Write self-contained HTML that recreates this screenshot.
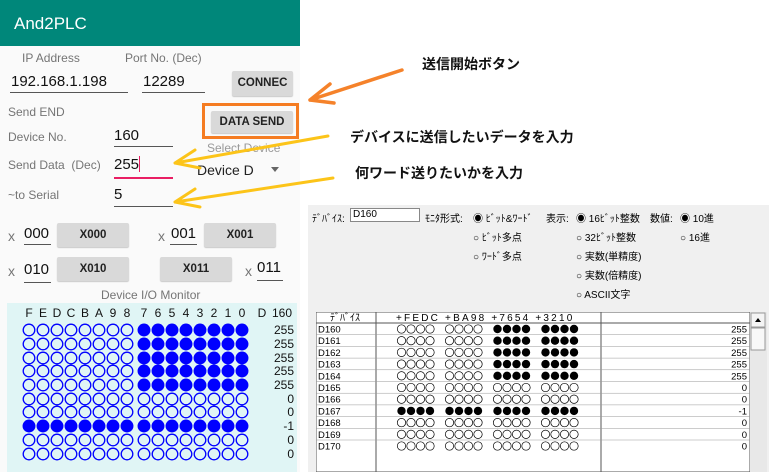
<!DOCTYPE html>
<html><head><meta charset="utf-8"><style>
*{margin:0;padding:0;box-sizing:border-box}
body{width:769px;height:472px;background:#fff;position:relative;overflow:hidden;font-family:"Liberation Sans","Noto Sans CJK JP",sans-serif}
.a{position:absolute;white-space:nowrap}
.ph{position:absolute;left:0;top:0;width:300px;height:472px;background:#fafafa}
.hdr{position:absolute;left:0;top:0;width:300px;height:46px;background:#00877a;color:#fff;font-size:17px;padding:14px 0 0 14px}
.lb{color:#757575;font-size:12px}
.in{font-size:15px;color:#111}
.ul{position:absolute;height:1px;background:#555}
.btn{position:absolute;background:#d9d9d9;border-radius:2px;font-size:11.5px;font-weight:bold;color:#222;text-align:center;box-shadow:0 1px 1px rgba(0,0,0,.2)}
.win{position:absolute;left:308px;top:205px;width:461px;height:267px;background:#f0f0f0;font-size:10px;color:#000}
.jp{font-family:"Liberation Sans","Noto Sans CJK JP",sans-serif;font-weight:bold;font-size:14px;color:#111}
</style></head><body>
<div class="ph">
<div class="hdr">And2PLC</div>
<div class="a lb" style="left:22px;top:51px">IP Address</div>
<div class="a lb" style="left:125px;top:51px">Port No. (Dec)</div>
<div class="a in" style="left:11px;top:73px">192.168.1.198</div>
<div class="ul" style="left:10px;top:92px;width:118px"></div>
<div class="a in" style="left:143px;top:73px">12289</div>
<div class="ul" style="left:142px;top:92px;width:63px"></div>
<div class="btn" style="left:232px;top:71px;width:61px;height:25px;line-height:25px">CONNEC</div>
<div class="a lb" style="left:8px;top:105px">Send END</div>
<div class="btn" style="left:211px;top:111px;width:82px;height:22px;line-height:22px">DATA SEND</div>
<div class="a lb" style="left:8px;top:130px">Device No.</div>
<div class="a in" style="left:114px;top:127px">160</div>
<div class="ul" style="left:114px;top:146px;width:59px"></div>
<div class="a lb" style="left:207px;top:141px;color:#999">Select Device</div>
<div class="a lb" style="left:8px;top:158px">Send Data &nbsp;(Dec)</div>
<div class="a in" style="left:114px;top:156px">255<span style="display:inline-block;width:1px;height:16px;background:#e91e63;vertical-align:-3px"></span></div>
<div class="ul" style="left:114px;top:177px;width:59px;height:2px;background:#e91e63"></div>
<div class="a" style="left:197px;top:162px;font-size:14px;color:#222">Device D</div>
<div class="a" style="left:271px;top:167px;width:0;height:0;border-left:4px solid transparent;border-right:4px solid transparent;border-top:5px solid #666"></div>
<div class="a lb" style="left:8px;top:188px">~to Serial</div>
<div class="a in" style="left:114px;top:186px">5</div>
<div class="ul" style="left:114px;top:206px;width:59px"></div>

<div class="a lb" style="left:8px;top:228px;font-size:14px">x</div>
<div class="a in" style="left:24px;top:225px">000</div>
<div class="ul" style="left:24px;top:244px;width:27px"></div>
<div class="btn" style="left:57px;top:223px;width:72px;height:24px;line-height:24px">X000</div>
<div class="a lb" style="left:158px;top:228px;font-size:14px">x</div>
<div class="a in" style="left:171px;top:225px">001</div>
<div class="ul" style="left:170px;top:244px;width:27px"></div>
<div class="btn" style="left:204px;top:223px;width:72px;height:24px;line-height:24px">X001</div>
<div class="a lb" style="left:8px;top:263px;font-size:14px">x</div>
<div class="a in" style="left:24px;top:261px">010</div>
<div class="ul" style="left:24px;top:282px;width:27px"></div>
<div class="btn" style="left:57px;top:257px;width:72px;height:24px;line-height:24px">X010</div>
<div class="btn" style="left:160px;top:257px;width:72px;height:24px;line-height:24px">X011</div>
<div class="a lb" style="left:245px;top:263px;font-size:14px">x</div>
<div class="a in" style="left:257px;top:259px">011</div>
<div class="ul" style="left:257px;top:280px;width:26px"></div>
<div class="a lb" style="left:101px;top:288px">Device I/O Monitor</div>
<svg class="a" style="left:7px;top:303px" width="290" height="169">
<rect width="290" height="169" fill="#e0f5f5"/>
<g font-size="12" fill="#111" font-family="Liberation Sans" text-anchor="middle">
<text x="22" y="14">F</text><text x="36" y="14">E</text><text x="50" y="14">D</text><text x="64" y="14">C</text><text x="78" y="14">B</text><text x="92" y="14">A</text><text x="106" y="14">9</text><text x="120" y="14">8</text>
<text x="137" y="14">7</text><text x="151" y="14">6</text><text x="165" y="14">5</text><text x="179" y="14">4</text><text x="193" y="14">3</text><text x="207" y="14">2</text><text x="221" y="14">1</text><text x="235" y="14">0</text>
<text x="255" y="14">D</text><text x="275" y="14">160</text>
</g>
<g id="g" stroke="#0000ff" stroke-width="1.3" fill="none"></g>
<g font-size="12" fill="#111" font-family="Liberation Sans" text-anchor="end">
<text x="287" y="31">255</text><text x="287" y="45">255</text><text x="287" y="59">255</text><text x="287" y="72">255</text><text x="287" y="86">255</text><text x="287" y="100">0</text><text x="287" y="113">0</text><text x="287" y="127">-1</text><text x="287" y="141">0</text><text x="287" y="155">0</text>
</g>
</svg>
</div>

<div class="win">
<div class="a" style="left:4px;top:5px">ﾃﾞﾊﾞｲｽ:</div>
<div class="a" style="left:42px;top:3px;width:70px;height:14px;background:#fff;border:1px solid #888;padding-left:2px;line-height:12px">D160</div>
<div class="a" style="left:117px;top:5px">ﾓﾆﾀ形式:</div>
<div class="a" style="left:165px;top:5px">◉ ﾋﾞｯﾄ&amp;ﾜｰﾄﾞ</div>
<div class="a" style="left:165px;top:24px">○ ﾋﾞｯﾄ多点</div>
<div class="a" style="left:165px;top:43px">○ ﾜｰﾄﾞ多点</div>
<div class="a" style="left:238px;top:5px">表示:</div>
<div class="a" style="left:268px;top:5px">◉ 16ﾋﾞｯﾄ整数</div>
<div class="a" style="left:268px;top:24px">○ 32ﾋﾞｯﾄ整数</div>
<div class="a" style="left:268px;top:43px">○ 実数(単精度)</div>
<div class="a" style="left:268px;top:62px">○ 実数(倍精度)</div>
<div class="a" style="left:268px;top:81px">○ ASCII文字</div>
<div class="a" style="left:342px;top:5px">数値:</div>
<div class="a" style="left:372px;top:5px">◉ 10進</div>
<div class="a" style="left:372px;top:24px">○ 16進</div>
<svg class="a" style="left:8px;top:107px" width="451" height="160">
<rect x="0" y="0" width="434" height="160" fill="#fff" stroke="#555"/>
<rect x="434" y="0" width="17" height="160" fill="#e8e8e8"/>
<rect x="435" y="1" width="14" height="14" fill="#f4f4f4" stroke="#999"/>
<path d="M439 10 L442 6 L445 10Z" fill="#000"/>
<rect x="435" y="16" width="14" height="22" fill="#f8f8f8" stroke="#999"/>
<line x1="0" y1="11" x2="434" y2="11" stroke="#555"/>
<line x1="60" y1="0" x2="60" y2="160" stroke="#555"/>
<line x1="285" y1="0" x2="285" y2="160" stroke="#555"/>
<g font-size="10" font-family="Liberation Sans,Noto Sans CJK JP" fill="#000">
<text x="14" y="9">ﾃﾞﾊﾞｲｽ</text>
<text x="80" y="9" letter-spacing="2.2">+FEDC +BA98 +7654 +3210</text>
</g>
<g id="t" font-size="9.5" font-family="Liberation Sans" fill="#000"></g>
</svg>
</div>

<div class="a" style="left:202px;top:103px;width:97px;height:36px;border:3px solid #f57c22"></div>
<svg class="a" style="left:0;top:0" width="769" height="472" style="pointer-events:none">
<g stroke-linecap="round" fill="none">
<path d="M402 70 L310 100 M310 100 L330 84 M310 100 L334 103" stroke="#f5822a" stroke-width="3.5"/>
<path d="M328 136 L175 163 M175 163 L195 150 M175 163 L200 168" stroke="#fcc419" stroke-width="3"/>
<path d="M333 178 L175 202 M175 202 L195 189 M175 202 L200 207" stroke="#fcc419" stroke-width="3"/>
</g>
</svg>
<div class="a jp" style="left:422px;top:54px">送信開始ボタン</div>
<div class="a jp" style="left:350px;top:127px">デバイスに送信したいデータを入力</div>
<div class="a jp" style="left:355px;top:163px">何ワード送りたいかを入力</div>
<script>
var vals=[255,255,255,255,255,0,0,-1,0,0];
var ys=[330,344,358,371,385,399,412,426,440,454];
var g=document.getElementById('g'),h='';
var xs=[22,36,50,64,78,92,106,120,137,151,165,179,193,207,221,235];
for(var r=0;r<10;r++){var v=vals[r]&0xffff;for(var c=0;c<16;c++){var on=(v>>(15-c))&1;h+='<circle cx="'+xs[c]+'" cy="'+(ys[r]-303)+'" r="5.8"'+(on?' fill="#0000ff"':'')+'/>';}}
g.innerHTML=h;
var tv=[255,255,255,255,255,0,0,-1,0,0,0];var t=document.getElementById('t'),s='';
var gx=[81,129,177,225];
for(var r=0;r<11;r++){var y=11+r*11.7;if(r>0)s+='<line x1="0" y1="'+y+'" x2="434" y2="'+y+'" stroke="#999" stroke-width="0.5"/>';
s+='<text x="2" y="'+(y+9.5)+'">D'+(160+r)+'</text><text x="431" y="'+(y+9.5)+'" text-anchor="end">'+tv[r]+'</text>';
var v=tv[r]&0xffff;for(var c=0;c<16;c++){var on=(v>>(15-c))&1;var cx=gx[c>>2]+(c&3)*9.5+4.5;s+='<circle cx="'+cx+'" cy="'+(y+6)+'" r="4.2" '+(on?'fill="#000"':'fill="none" stroke="#000" stroke-width="0.7"')+'/>';}}
t.innerHTML=s;
</script>
</body></html>
